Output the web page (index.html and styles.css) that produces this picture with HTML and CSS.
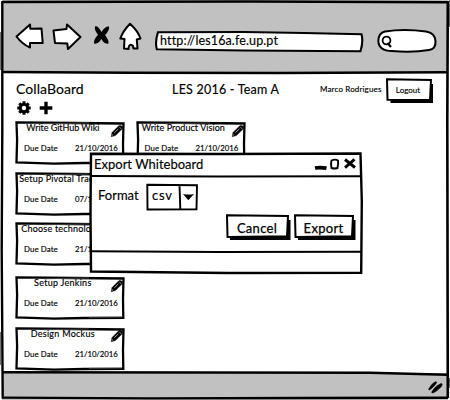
FILE: index.html
```
<!DOCTYPE html>
<html lang="en">
<head>
<meta charset="utf-8">
<title>CollaBoard</title>
<link rel="stylesheet" href="styles.css">
</head>
<body>
<svg class="defs" width="0" height="0">
  <symbol id="pencil" viewBox="0 0 14 14"><path d="M1.200 12.700 2 8.600 8.800 1.700Q10.500.9 12 2.200 13.300 3.500 12.400 4.800L5.400 11.600Z" fill="#000" stroke="#000" stroke-width=".4"/><path d="M4.300 8.800 8.300 4.900M2.300 11.600 2.700 10.400M9.600 3.200l1.500 1.600" stroke="#ccc" stroke-width=".8"/></symbol>
  <symbol id="card" viewBox="0 0 112 46"><path d="M2.500 2.400 60 3 109.500 3.500 109 24 109.300 42.800 70 43 40 43.700 2.500 42.300 3.100 20Z" fill="#fff" stroke="#000" stroke-width="2.300"/><path d="M30 3.800 75 2.900M75 42.300 108 42" stroke="#555" stroke-width=".8"/></symbol>
</svg>
<div class="window">
  <header class="toolbar">
    <svg class="nav" width="130" height="34" viewBox="0 0 130 34" fill="#fff" stroke="#000" stroke-width="2" stroke-linejoin="round">
      <path d="M1.500 16.500 15 4.500l.3 4.300L26.500 8.400 27.700 23 15 23v4.500Q7 24 1.500 16.500Z"/>
      <path d="M38.500 10.500 51.500 9 52 4.500 65.500 17 53 29 52.300 23.500 40 23Z"/>
      <path d="M80 6.500Q83 5.500 86.500 12 90 6 94 6.500 95 10 90 15 94 20 93.500 23.500 89 24.500 86.500 19 83 24.500 79 23.500 78.500 19 83 15 79 9.500 80 6.500Z" fill="#000" stroke="none"/>
      <path d="M115 3.700Q123 11 125.500 18.500L121.800 19.500 122.500 28.500H118.500L118 26Q115.500 23.500 114 26L113.500 29 109 28.500 109.500 19 105.300 18.500Q108 11 115 3.700Z"/>
    </svg>
    <div class="address">
      <svg class="sketch" viewBox="0 0 210 24"><path d="M4 3.200 90 3 150 4 207.500 5.300Q209.500 12 206.500 22.200L90 21.500 2.800 20.300Q.8 13 4 3.200Z" fill="#fff" stroke="#000" stroke-width="2.100"/></svg>
      <span>http://les16a.fe.up.pt</span>
    </div>
    <svg class="search" width="62" height="28" viewBox="0 0 62 28"><path d="M9 4.500Q28 1.500 50 4.500 59 6 59.500 14 60 22 53 23 36 26 16 24 3 24 2.300 14 2.500 6 9 4.500Z" fill="#fff" stroke="#000" stroke-width="2"/><circle cx="10.500" cy="13.500" r="3.900" fill="none" stroke="#000" stroke-width="1.800"/><path d="M11.500 16l3.500 4" stroke="#000" stroke-width="2.200"/></svg>
  </header>

  <main class="page">
    <div class="top">
      <h1>CollaBoard</h1>
      <h2>LES 2016 - Team A</h2>
      <span class="user">Marco Rodrigues</span>
      <button class="logout">
        <svg class="sketch" viewBox="0 0 50 28"><path d="M5.500 7H48V26H5.500Z" fill="#000"/><path d="M2 2.300 46 3 45 23 2.500 22.700Z" fill="#fff" stroke="#000" stroke-width="2"/></svg>
        <span>Logout</span>
      </button>
    </div>
    <div class="tools">
      <svg width="14" height="14" viewBox="-7 -7 14 14"><g fill="#000"><rect x="-1.500" y="-6.700" width="3" height="13.400"/><rect x="-6.700" y="-1.500" width="13.400" height="3"/><rect x="-1.500" y="-6.700" width="3" height="13.400" transform="rotate(45)"/><rect x="-1.500" y="-6.700" width="3" height="13.400" transform="rotate(-45)"/></g><circle r="3.700" fill="#fff" stroke="#000" stroke-width="3"/></svg>
      <svg width="14" height="14" viewBox="0 0 14 14"><path d="M7 .7V13.300M.7 7H13.300" stroke="#000" stroke-width="3.300"/></svg>
    </div>
    <div class="board">
      <section class="column">
        <article class="card"><svg class="sketch"><use href="#card"/></svg><h3 class="wiki">Write GitHub Wiki</h3><svg class="edit"><use href="#pencil"/></svg><p><span>Due Date</span><time>21/10/2016</time></p></article>
        <article class="card"><svg class="sketch"><use href="#card"/></svg><h3 class="long">Setup Pivotal Tracker</h3><svg class="edit"><use href="#pencil"/></svg><p><span>Due Date</span><time>07/10/2016</time></p></article>
        <article class="card"><svg class="sketch"><use href="#card"/></svg><h3 class="long tech">Choose technologies</h3><svg class="edit"><use href="#pencil"/></svg><p><span>Due Date</span><time>21/10/2016</time></p></article>
        <article class="card fourth"><svg class="sketch"><use href="#card"/></svg><h3>Setup Jenkins</h3><svg class="edit"><use href="#pencil"/></svg><p><span>Due Date</span><time>21/10/2016</time></p></article>
        <article class="card"><svg class="sketch"><use href="#card"/></svg><h3>Design Mockus</h3><svg class="edit"><use href="#pencil"/></svg><p><span>Due Date</span><time>21/10/2016</time></p></article>
      </section>
      <section class="column">
        <article class="card"><svg class="sketch"><use href="#card"/></svg><h3 class="vision">Write Product Vision</h3><svg class="edit"><use href="#pencil"/></svg><p><span>Due Date</span><time>21/10/2016</time></p></article>
      </section>
    </div>
  </main>

  <footer class="status">
    <svg width="18" height="16" viewBox="0 0 18 16"><path d="M2 10.500Q5 5 9 3.500 10.500 4 8 7 5 10.500 2.500 12 1 12 2 10.500ZM5 13.500Q8 8 14 5.500 16.500 5.500 14 9 9 14 6 15 4 15 5 13.500Z" fill="#000" stroke="#000" stroke-width=".5"/></svg>
  </footer>

  <svg class="frame" viewBox="0 0 450 400" fill="none" stroke="#000">
    <path d="M2.500 2 250 1.600 447.500 2.300" stroke-width="2.500"/>
    <path d="M2.300 1V130L1.700 250 2.700 398.500" stroke-width="2.400"/>
    <path d="M447.800 1 447.300 120 447.600 300 447.800 398" stroke-width="2.600"/>
    <path d="M2 72 130 72.800 280 73 447 72.300" stroke-width="2.600"/>
    <path d="M2 372.300 200 372.600 370 372.800 447 374.800" stroke-width="2.500"/>
    <path d="M2 397.600 150 398.400 300 398 448 397.700" stroke-width="2.400"/>
    <path d="M449.500 0V27M449.500 378V388M.4 32V70M.4 332V365" stroke="#666"/>
  </svg>

  <div class="dialog" role="dialog">
    <svg class="sketch" viewBox="0 0 276 124"><path d="M3 2.800 140 3 272.500 2.500 273.800 50 273.200 121.800 140 122 3 120.500 2.500 60Z" fill="#fff" stroke="#000" stroke-width="2.400"/><path d="M2 25 130 25.600 273 25.300M2 100.200 130 101 273 100.700" fill="none" stroke="#000" stroke-width="2"/></svg>
    <div class="titlebar">
      <span>Export Whiteboard</span>
      <svg width="44" height="14" viewBox="0 0 44 14" fill="none" stroke="#000"><path d="M1 11Q6 10.100 12.500 11.200" stroke-width="3.800"/><path d="M17.500 3.500Q21 1.800 24 3.500 24.500 7 23.500 11 20.500 12 17.500 11 16.500 7 17.500 3.500Z" stroke-width="1.900"/><path d="M31 2.500 41 10.500M40.500 2.300 31 10.700" stroke-width="2.900"/></svg>
    </div>
    <div class="form">
      <label>Format</label>
      <div class="select">
        <svg class="sketch" viewBox="0 0 54 28"><path d="M2.300 1.800 52 2.200 51.500 26.200 2.500 26.500ZM34.500 2 35.300 26" fill="#fff" stroke="#000" stroke-width="1.900"/><path d="M38 11Q43.500 12 49 11L43.300 17.300Z" fill="#000"/></svg>
        <span>csv</span>
      </div>
    </div>
    <div class="actions">
      <button class="cancel"><svg class="sketch" viewBox="0 0 66 29"><path d="M5 7H65.500V27H5Z" fill="#000"/><path d="M2 2.300 63 3 62 23.300 2.500 24Z" fill="#fff" stroke="#000" stroke-width="2"/></svg><span>Cancel</span></button>
      <button class="export"><svg class="sketch" viewBox="0 0 63 29"><path d="M5 7H62.500V27H5Z" fill="#000"/><path d="M2 2.300 60 3 59 23.300 2.500 24Z" fill="#fff" stroke="#000" stroke-width="2"/></svg><span>Export</span></button>
    </div>
  </div>
</div>
</body>
</html>
```
FILE: styles.css
```
* { box-sizing: border-box; }
body { margin: 0; color: #000; font-family: Lato, "Liberation Sans", sans-serif; -webkit-text-stroke: .15px #000; }
h1, h2, h3, p { margin: 0; font-weight: 400; white-space: nowrap; }
button { border: 0; background: none; padding: 0; font-family: inherit; color: inherit; position: relative; }
svg { display: block; flex: none; }
.defs { position: absolute; }
.sketch { position: absolute; inset: 0; width: 100%; height: 100%; }
.sketch ~ span, .titlebar, .form, .actions { position: relative; }

.window { position: relative; width: 450px; height: 400px; display: grid; grid-template-rows: 73px 1fr 27px; background: #fff; overflow: hidden; }
.frame { position: absolute; inset: 0; width: 450px; height: 400px; }

.toolbar { background: #c1c1c1; margin: 0 2px; padding: 20px 0 0 13px; display: flex; align-items: flex-start; }
.address { position: relative; width: 210px; height: 24px; margin: 9px 0 0 8.500px; padding-left: 6.500px; line-height: 24px; font-size: 12.5px; white-space: nowrap; letter-spacing: .13px; }
.search { margin: 7px 0 0 12.500px; }

.page { padding: 4px 0 0 15px; min-height: 0; }
.top { display: flex; height: 25px; line-height: 25px; white-space: nowrap; }
.top h1 { width: 156px; padding-left: 1px; font-size: 14px; line-height: 24px; letter-spacing: .07px; }
.top h2 { width: 148px; padding-left: 1px; font-size: 12.5px; letter-spacing: .22px; }
.user { width: 66px; padding-left: 1px; font-size: 8px; letter-spacing: .15px; }
.logout { width: 50px; height: 28px; margin-top: -.5px; font-size: 8px; line-height: 25px; }
.logout span { left: -2px; }

.tools { display: flex; gap: 8px; padding: 0 0 0 2px; height: 18px; }
.tools svg { margin-top: -1px; }
.board { display: flex; gap: 8.500px; margin-left: -.7px; }
.column { display: flex; flex-direction: column; gap: 4.700px; width: 112px; }
.card { position: relative; height: 46px; padding-right: 17px; }
.fourth { margin-top: 3px; }
.card h3 { position: relative; height: 17px; line-height: 16px; font-size: 9px; text-align: center; letter-spacing: .27px; padding-left: 2px; }
.card .wiki { letter-spacing: -.05px; }
.card .vision { letter-spacing: .05px; }
.card .long { text-align: left; padding-left: 5px; letter-spacing: .2px; }
.card .tech { padding-left: 7px; }
.edit { position: absolute; right: 2px; top: 3.500px; width: 14px; height: 14px; }
.card p { position: relative; display: flex; padding: 5px 0 0 9.700px; font-size: 7.800px; line-height: 12px; letter-spacing: .12px; }
.card p span { flex: none; width: 51px; }
.card time { letter-spacing: -.05px; }

.status { background: #c1c1c1; margin: 0 2px; padding: 5px 3px 0 0; display: flex; justify-content: flex-end; }

.dialog { position: absolute; left: 88px; top: 151px; width: 276px; height: 124px; }
.titlebar { height: 26px; padding: 6px 6px 0 6px; display: flex; justify-content: space-between; font-size: 13px; line-height: 15px; }
.form { display: flex; padding: 6px 0 0 10px; height: 36px; font-size: 13px; line-height: 25px; }
.form label { width: 47px; }
.select { position: relative; width: 54px; height: 28px; padding-left: 7px; letter-spacing: .8px; }
.actions { display: flex; gap: 2px; padding-left: 137px; }
.actions button { font-size: 13px; height: 29px; line-height: 24px; -webkit-text-stroke: .25px #000; letter-spacing: .3px; }
.cancel { width: 66px; }
.export { width: 63px; }
.actions span { left: -1px; }
```
